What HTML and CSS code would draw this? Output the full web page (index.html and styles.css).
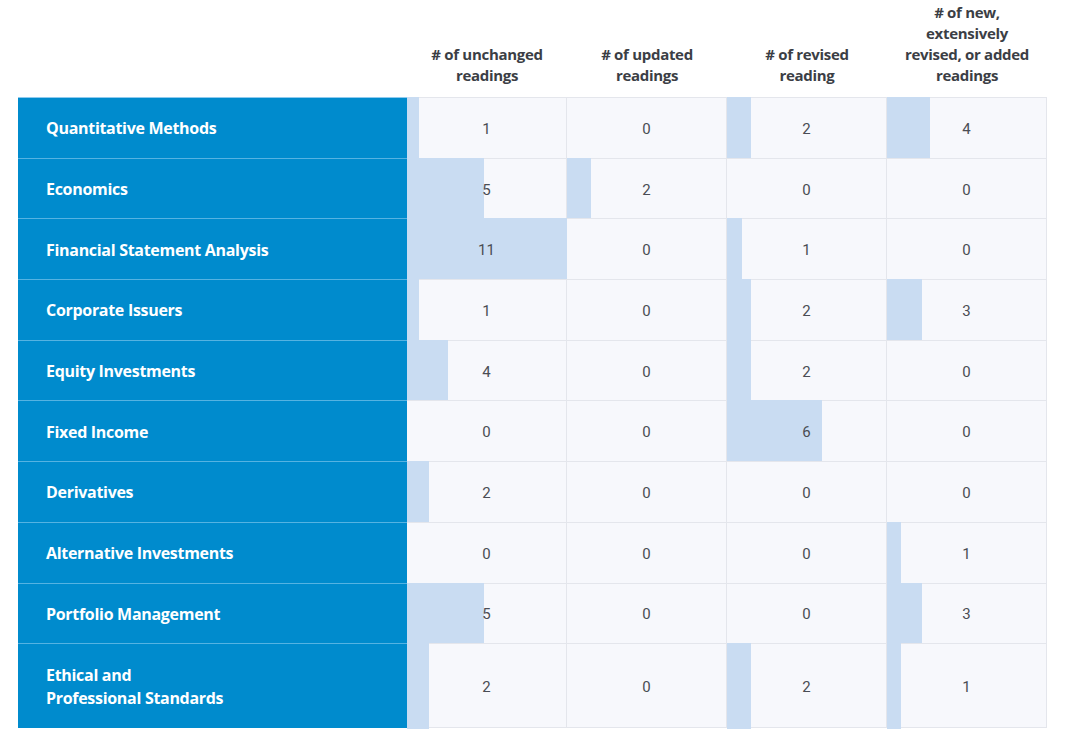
FILE: index.html
```html
<!DOCTYPE html>
<html lang="en">
<head>
<meta charset="utf-8">
<title>Readings by topic</title>
<link rel="stylesheet" href="styles.css">
</head>
<body>
<div class="table">
  <div class="head blank"></div>
  <div class="head">#&nbsp;of unchanged<br>readings</div>
  <div class="head"># of updated<br>readings</div>
  <div class="head"># of revised<br>reading</div>
  <div class="head"># of new,<br>extensively<br>revised, or added<br>readings</div>

  <div class="label first">Quantitative Methods</div>
  <div class="cell first"><span class="bar" style="width:12px"></span><span class="num">1</span></div>
  <div class="cell first"><span class="num">0</span></div>
  <div class="cell first"><span class="bar" style="width:24px"></span><span class="num">2</span></div>
  <div class="cell first"><span class="bar" style="width:43px"></span><span class="num">4</span></div>

  <div class="label">Economics</div>
  <div class="cell"><span class="bar" style="width:77px"></span><span class="num">5</span></div>
  <div class="cell"><span class="bar" style="width:24px"></span><span class="num">2</span></div>
  <div class="cell"><span class="num">0</span></div>
  <div class="cell"><span class="num">0</span></div>

  <div class="label">Financial Statement Analysis</div>
  <div class="cell"><span class="bar" style="width:160px"></span><span class="num">11</span></div>
  <div class="cell"><span class="num">0</span></div>
  <div class="cell"><span class="bar" style="width:15px"></span><span class="num">1</span></div>
  <div class="cell"><span class="num">0</span></div>

  <div class="label">Corporate Issuers</div>
  <div class="cell"><span class="bar" style="width:12px"></span><span class="num">1</span></div>
  <div class="cell"><span class="num">0</span></div>
  <div class="cell"><span class="bar" style="width:24px"></span><span class="num">2</span></div>
  <div class="cell"><span class="bar" style="width:35px"></span><span class="num">3</span></div>

  <div class="label">Equity Investments</div>
  <div class="cell"><span class="bar" style="width:41px"></span><span class="num">4</span></div>
  <div class="cell"><span class="num">0</span></div>
  <div class="cell"><span class="bar" style="width:24px"></span><span class="num">2</span></div>
  <div class="cell"><span class="num">0</span></div>

  <div class="label">Fixed Income</div>
  <div class="cell"><span class="num">0</span></div>
  <div class="cell"><span class="num">0</span></div>
  <div class="cell"><span class="bar" style="width:95px"></span><span class="num">6</span></div>
  <div class="cell"><span class="num">0</span></div>

  <div class="label">Derivatives</div>
  <div class="cell"><span class="bar" style="width:22px"></span><span class="num">2</span></div>
  <div class="cell"><span class="num">0</span></div>
  <div class="cell"><span class="num">0</span></div>
  <div class="cell"><span class="num">0</span></div>

  <div class="label">Alternative Investments</div>
  <div class="cell"><span class="num">0</span></div>
  <div class="cell"><span class="num">0</span></div>
  <div class="cell"><span class="num">0</span></div>
  <div class="cell"><span class="bar" style="width:14px"></span><span class="num">1</span></div>

  <div class="label">Portfolio Management</div>
  <div class="cell"><span class="bar" style="width:77px"></span><span class="num">5</span></div>
  <div class="cell"><span class="num">0</span></div>
  <div class="cell"><span class="num">0</span></div>
  <div class="cell"><span class="bar" style="width:35px"></span><span class="num">3</span></div>

  <div class="label last">Ethical and<br>Professional Standards</div>
  <div class="cell last"><span class="bar" style="width:22px"></span><span class="num">2</span></div>
  <div class="cell last"><span class="num">0</span></div>
  <div class="cell last"><span class="bar" style="width:24px"></span><span class="num">2</span></div>
  <div class="cell last"><span class="bar" style="width:14px"></span><span class="num">1</span></div>
</div>
</body>
</html>
```

FILE: styles.css
```css
html, body {
  margin: 0;
  padding: 0;
  background: #ffffff;
}

body {
  font-family: Roboto, "Liberation Sans", sans-serif;
  width: 1080px;
  height: 737px;
  overflow: hidden;
}

.table {
  display: grid;
  grid-template-columns: 389px 160px 160px 160px 160px;
  grid-template-rows: 97px repeat(9, 60.7px) 85px;
  margin-left: 18px;
}

.head {
  display: flex;
  align-items: flex-end;
  justify-content: center;
  text-align: center;
  padding-bottom: 11px;
  font-family: "Open Sans", Roboto, sans-serif;
  font-size: 15px;
  font-weight: 700;
  line-height: 21px;
  color: #3b3e45;
  letter-spacing: -0.3px;
}

.label {
  display: flex;
  align-items: center;
  background: #008bcd;
  color: #ffffff;
  font-family: "Open Sans", Roboto, sans-serif;
  font-size: 16px;
  font-weight: 700;
  line-height: 23px;
  padding-left: 28px;
  padding-top: 2px;
  border-top: 1px solid #55b3e2;
  letter-spacing: -0.3px;
}

.label.first {
  border-top: 1px solid #8fcbef;
}

.cell {
  position: relative;
  display: flex;
  align-items: center;
  justify-content: center;
  padding-top: 2px;
  background: #f7f8fc;
  border-top: 1px solid #e4e6ec;
  border-right: 1px solid #e4e6ec;
}

.cell.last {
  border-bottom: 1px solid #e4e6ec;
}

.bar {
  position: absolute;
  left: 0;
  top: -1px;
  bottom: 0;
  background: #c9dcf2;
}

.cell.last .bar {
  bottom: -2px;
}

.num {
  position: relative;
  font-size: 15px;
  font-weight: 400;
  color: #4a4d54;
}
```
